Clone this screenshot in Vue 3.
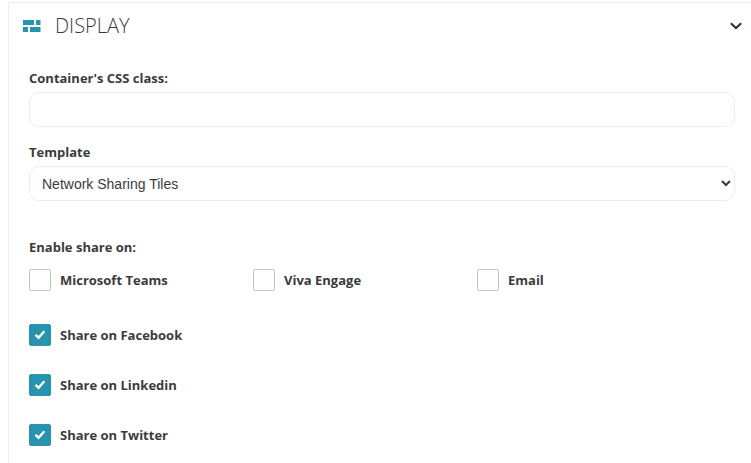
<template>
  <section class="panel">
    <h2 class="panel-heading">
      <button
        type="button"
        class="panel-toggle"
        aria-controls="display-body"
        :aria-expanded="open"
        @click="open = !open"
      >
        <svg class="panel-icon" viewBox="0 0 18 12" aria-hidden="true">
          <path d="M0 0h11v5H0zM13 0h4.500v5H13zM0 7h5v5H0zM7 7h10.500v5H7z" />
        </svg>
        <span class="panel-title">DISPLAY</span>
        <svg class="panel-chevron" :class="{ closed: !open }" viewBox="0 0 12 8" aria-hidden="true">
          <path d="M.8 1.200L6 6l5.200-4.800" />
        </svg>
      </button>
    </h2>

    <div v-show="open" id="display-body" class="panel-body">
      <div class="field">
        <label for="css-class">Container's CSS class:</label>
        <input id="css-class" v-model="cssClass" class="control" type="text" />
      </div>

      <div class="field">
        <label for="template">Template</label>
        <select id="template" v-model="template" class="control">
          <option v-for="name in templates" :key="name">{{ name }}</option>
        </select>
      </div>

      <fieldset class="share">
        <legend>Enable share on:</legend>
        <div class="share-row">
          <label v-for="item in channels" :key="item.id" class="check">
            <input v-model="item.enabled" type="checkbox" />
            <span>{{ item.label }}</span>
          </label>
        </div>
        <div class="share-list">
          <label v-for="item in networks" :key="item.id" class="check">
            <input v-model="item.enabled" type="checkbox" />
            <span>{{ item.label }}</span>
          </label>
        </div>
      </fieldset>
    </div>
  </section>
</template>

<script setup>
import { ref } from 'vue'

const open = ref(true)
const cssClass = ref('')
const template = ref('Network Sharing Tiles')

const templates = ['Network Sharing Tiles']

const channels = ref([
  { id: 'teams', label: 'Microsoft Teams', enabled: false },
  { id: 'viva', label: 'Viva Engage', enabled: false },
  { id: 'email', label: 'Email', enabled: false }
])

const networks = ref([
  { id: 'facebook', label: 'Share on Facebook', enabled: true },
  { id: 'linkedin', label: 'Share on Linkedin', enabled: true },
  { id: 'twitter', label: 'Share on Twitter', enabled: true }
])
</script>

<style>
body {
  background-color: #fff;
}
</style>

<style scoped>
.panel {
  margin: 2px 0 0 8px;
  border-top: 1px solid #ededed;
  border-left: 1px solid #ededed;
  padding-bottom: 20px;
  color: #3b3b3b;
  font-family: 'Segoe UI', 'Open Sans', sans-serif;
  font-size: 13px;
  font-weight: 700;
  line-height: 20px;
}

.panel-heading {
  margin: 0;
}

.panel-toggle {
  display: flex;
  align-items: center;
  width: 100%;
  height: 46px;
  padding: 0 9px 0 14px;
  border: none;
  background: none;
  color: inherit;
  font-family: inherit;
  cursor: pointer;
}

.panel-icon {
  width: 18px;
  height: 12px;
  margin-right: 14px;
  fill: #2793af;
}

.panel-title {
  font-size: 20px;
  font-weight: 300;
  line-height: 28px;
}

.panel-chevron {
  width: 12px;
  height: 8px;
  margin-left: auto;
  fill: none;
  stroke: #3b3028;
  stroke-width: 2.2;
}

.panel-chevron.closed {
  transform: rotate(-90deg);
}

.panel-body {
  padding: 19px 16px 0 20px;
}

.field {
  display: flex;
  flex-direction: column;
  gap: 4px;
  margin-bottom: 15px;
}

.control {
  box-sizing: border-box;
  width: 100%;
  height: 35px;
  padding: 0 12px;
  border: 1px solid #ededed;
  border-radius: 10px;
  background-color: #fff;
  color: #3b3b3b;
  font-family: 'Liberation Sans', Arial, sans-serif;
  font-size: 14px;
}

select.control {
  padding: 0 0 0 8px;
}

.share {
  min-width: 0;
  margin: 36px 0 0;
  padding: 0;
  border: none;
}

.share legend {
  padding: 0;
  margin-bottom: 12px;
}

.share-row {
  display: grid;
  grid-template-columns: repeat(3, 1fr);
  padding-right: 34px;
  margin-bottom: 33px;
}

.share-list {
  display: flex;
  flex-direction: column;
  align-items: flex-start;
  gap: 28px;
}

.check {
  display: flex;
  align-items: center;
  gap: 9px;
  cursor: pointer;
}

.check input {
  appearance: none;
  flex: none;
  box-sizing: border-box;
  width: 22px;
  height: 22px;
  margin: 0;
  border: 1px solid #c4c4c4;
  border-radius: 2px;
  background-color: #fff;
  cursor: pointer;
}

.check input:checked {
  border-color: #2793af;
  background: #2793af url("data:image/svg+xml,%3Csvg xmlns='http://www.w3.org/2000/svg' viewBox='0 0 12 10'%3E%3Cpath d='M1.500 4.800l3.100 2.900 5.700-6.400' fill='none' stroke='%23fff' stroke-width='2.4'/%3E%3C/svg%3E") center / 12px 10px no-repeat;
}
</style>
